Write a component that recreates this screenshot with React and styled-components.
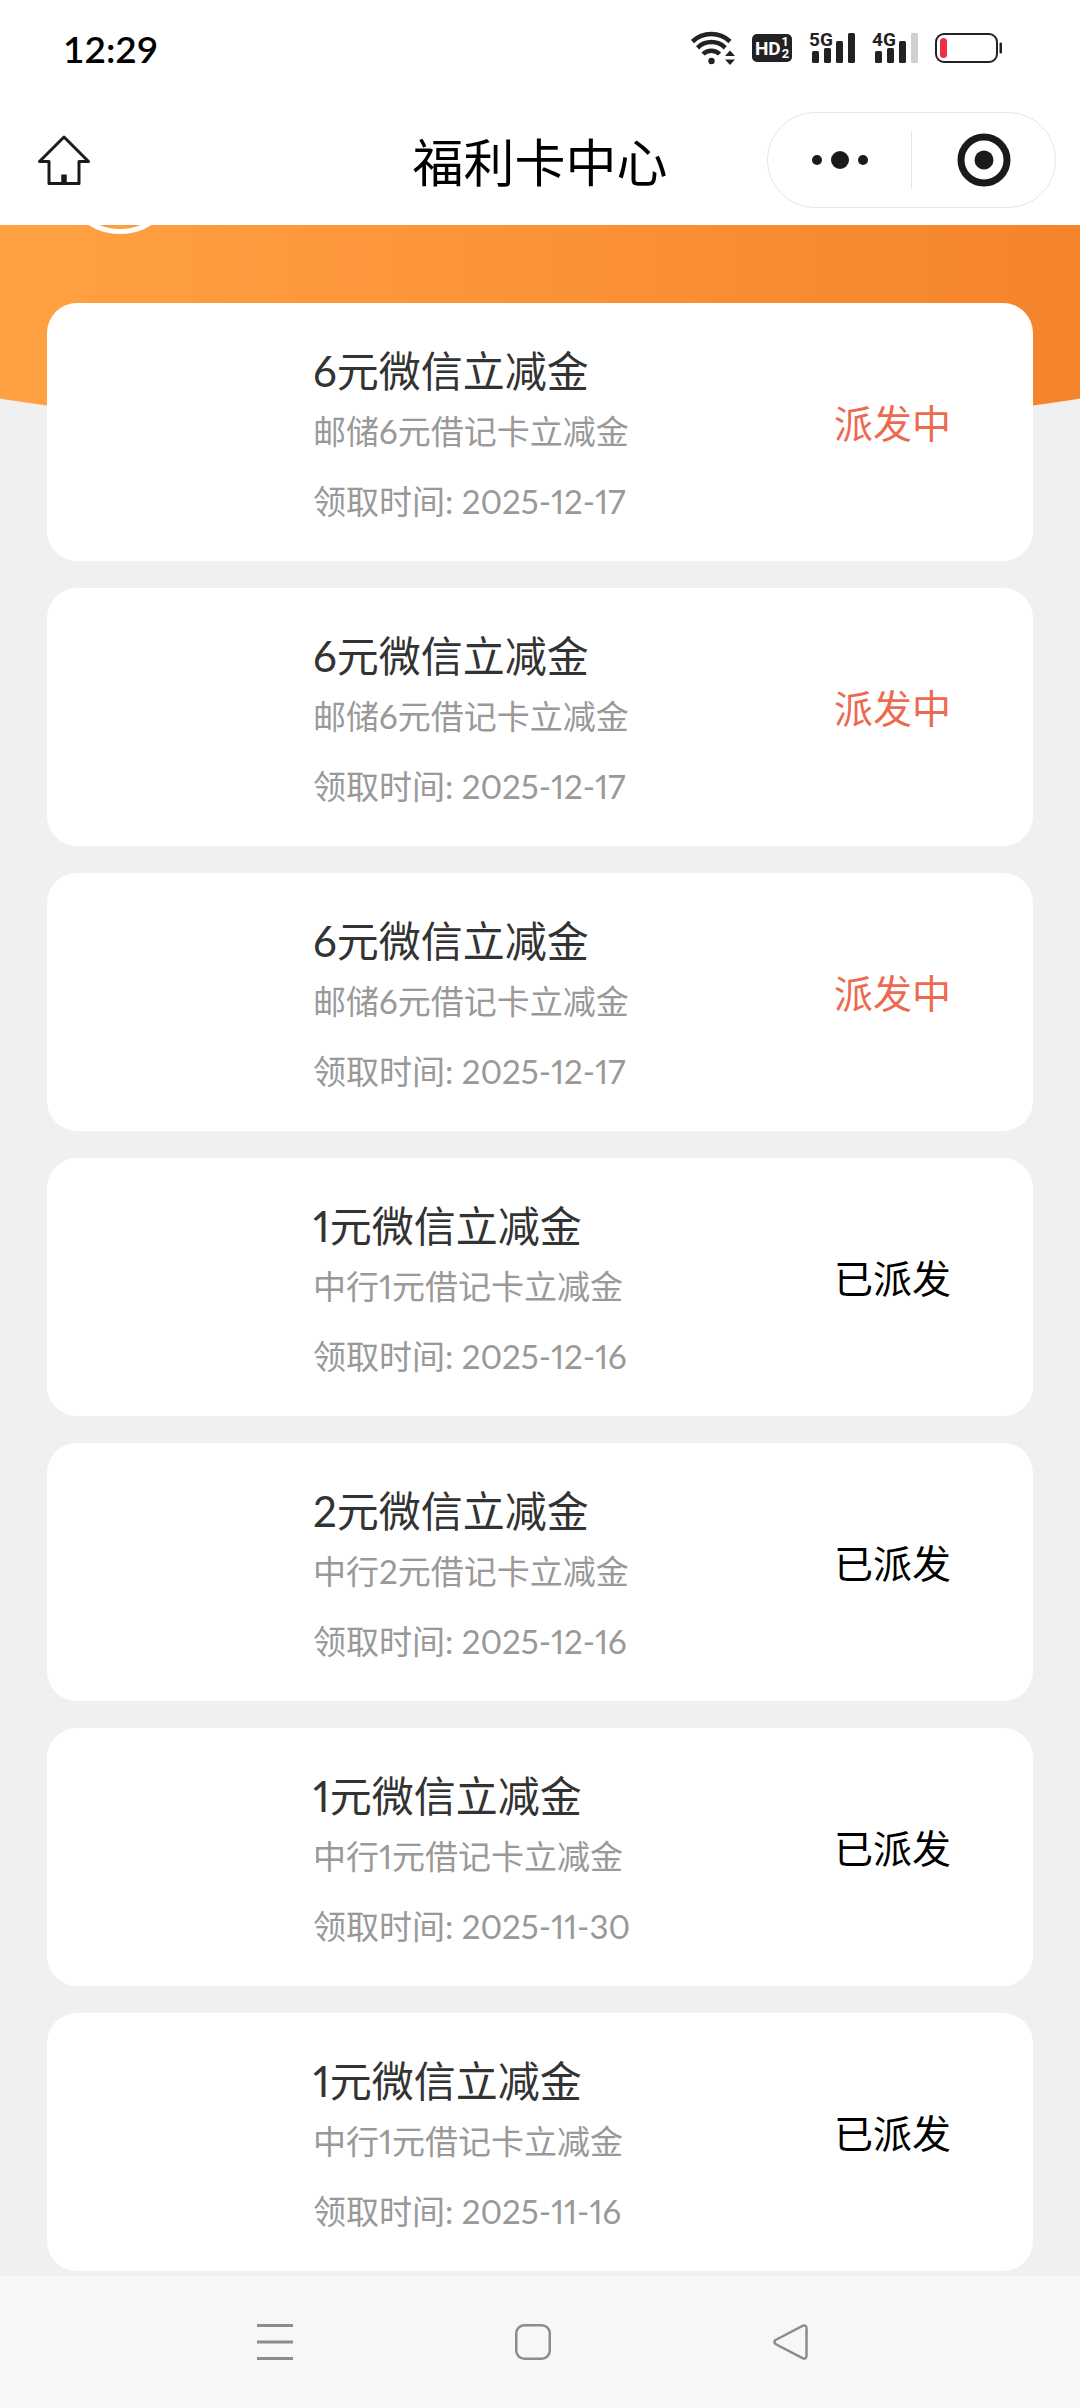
import React from "react";
import styled, { createGlobalStyle } from "styled-components";

const records = [
  { id: 1, amount: 6, bank: "邮储", date: "2025-12-17", pending: true },
  { id: 2, amount: 6, bank: "邮储", date: "2025-12-17", pending: true },
  { id: 3, amount: 6, bank: "邮储", date: "2025-12-17", pending: true },
  { id: 4, amount: 1, bank: "中行", date: "2025-12-16", pending: false },
  { id: 5, amount: 2, bank: "中行", date: "2025-12-16", pending: false },
  { id: 6, amount: 1, bank: "中行", date: "2025-11-30", pending: false },
  { id: 7, amount: 1, bank: "中行", date: "2025-11-16", pending: false },
];

function WifiIcon() {
  return (
    <svg width="44" height="34" viewBox="0 0 44 34" fill="none" stroke="#222" strokeWidth="4.500">
      <path d="M1.500 10.500a27.500 27.500 0 0 1 37.500 0" />
      <path d="M6.600 16.800a19.600 19.600 0 0 1 27.600 0" />
      <path d="M12 23a12 12 0 0 1 16.600 0" />
      <circle cx="20.500" cy="30" r="3.200" fill="#222" stroke="none" />
      <path d="M34 25l5-5.500 5 5.500zM34 28.500l5 5.500 5-5.500z" fill="#222" stroke="none" />
    </svg>
  );
}

function SignalIcon({ label, weak }) {
  return (
    <svg width="46" height="42" viewBox="0 -4 46 42" fill="#222">
      <text x="0" y="15" fontFamily="Roboto, sans-serif" fontSize="19" fontWeight="700">
        {label}
      </text>
      <rect x="3" y="20" width="7" height="12" rx="1.500" />
      <rect x="15" y="17" width="7" height="15" rx="1.500" />
      <rect x="27" y="10" width="7" height="22" rx="1.500" />
      <rect x="39" y="2" width="7" height="30" rx="1.500" fill={weak ? "#d0d0d0" : "#222"} />
    </svg>
  );
}

function BatteryIcon() {
  return (
    <svg width="67" height="34" viewBox="0 0 67 34" fill="none">
      <rect x="1" y="3" width="61" height="28" rx="8" stroke="#222" strokeWidth="2" />
      <rect x="5" y="7" width="7" height="20" rx="3.500" fill="#ee2f45" />
      <rect x="64.500" y="11.500" width="2.500" height="11" rx="1" fill="#222" />
    </svg>
  );
}

export default function App() {
  return (
    <Page>
      <GlobalStyle />
      <Header>
        <StatusBar>
          <time>12:29</time>
          <StatusIcons>
            <WifiIcon />
            <HdBadge>
              HD
              <HdLines>
                <span>1</span>
                <span>2</span>
              </HdLines>
            </HdBadge>
            <SignalIcon label="5G" />
            <SignalIcon label="4G" weak />
            <BatteryIcon />
          </StatusIcons>
        </StatusBar>
        <TitleBar>
          <HomeButton aria-label="首页">
            <svg width="54" height="50" viewBox="0 0 54 50" fill="none" stroke="#1a1a1a" strokeWidth="3" strokeLinejoin="round">
              <path d="M27 2L2.500 26.500H12V48.500H42V26.500H51.500Z" />
              <path d="M27 39.500V48" strokeWidth="5.500" />
            </svg>
          </HomeButton>
          <h1>福利卡中心</h1>
          <Capsule>
            <IconButton aria-label="更多">
              <svg width="58" height="20" viewBox="0 0 58 20" fill="#1a1a1a">
                <circle cx="6" cy="10" r="5" />
                <circle cx="29" cy="10" r="9" />
                <circle cx="52" cy="10" r="5" />
              </svg>
            </IconButton>
            <Divider />
            <IconButton aria-label="关闭">
              <svg width="54" height="54" viewBox="0 0 54 54" fill="#1a1a1a">
                <circle cx="27" cy="27" r="23" fill="none" stroke="#1a1a1a" strokeWidth="7" />
                <circle cx="27" cy="27" r="9.500" />
              </svg>
            </IconButton>
          </Capsule>
        </TitleBar>
      </Header>
      <Content>
        <Banner />
        <Avatar />
        <CardList>
          {records.map((item) => (
            <Card key={item.id}>
              <Info>
                <h2>{item.amount}元微信立减金</h2>
                <p>
                  {item.bank}
                  {item.amount}元借记卡立减金
                </p>
                <p className="time">领取时间: {item.date}</p>
              </Info>
              <Status $pending={item.pending}>{item.pending ? "派发中" : "已派发"}</Status>
            </Card>
          ))}
        </CardList>
      </Content>
      <NavBar>
        <IconButton aria-label="最近任务">
          <svg width="36" height="36" viewBox="0 0 36 36" stroke="#8c8c8c" strokeWidth="3">
            <path d="M0 1.500H36M0 18H36M0 34.500H36" />
          </svg>
        </IconButton>
        <IconButton aria-label="主屏幕">
          <svg width="36" height="36" viewBox="0 0 36 36" fill="none" stroke="#8c8c8c" strokeWidth="2.500">
            <rect x="1.250" y="1.250" width="33.500" height="33.500" rx="8" />
          </svg>
        </IconButton>
        <IconButton aria-label="返回">
          <svg width="36" height="36" viewBox="0 0 36 36" fill="none" stroke="#8c8c8c" strokeWidth="2.500">
            <path d="M2.500 16L29.500 1.800Q33.500 0.500 33.500 4.500V31.500Q33.500 35.500 29.500 34.200L2.500 20Q0.500 18 2.500 16Z" />
          </svg>
        </IconButton>
      </NavBar>
    </Page>
  );
}

const GlobalStyle = createGlobalStyle`
  * {
    box-sizing: border-box;
    margin: 0;
    padding: 0;
  }
  body {
    background-color: #f0f0f0;
    font-family: Lato, "Noto Sans CJK SC", sans-serif;
    font-variant-numeric: proportional-nums;
  }
`;

const Page = styled.div`
  display: flex;
  flex-direction: column;
  min-height: 100vh;
`;

const Header = styled.header`
  position: relative;
  z-index: 1;
  background-color: #fff;
  padding-bottom: 17px;
`;

const StatusBar = styled.div`
  display: flex;
  align-items: center;
  justify-content: space-between;
  height: 96px;
  padding: 0 78px 0 63px;
  time {
    font-size: 37px;
    font-weight: 600;
    font-variant-numeric: tabular-nums;
    color: #000;
  }
`;

const StatusIcons = styled.div`
  display: flex;
  align-items: center;
  gap: 17px;
`;

const HdBadge = styled.span`
  display: flex;
  align-items: center;
  justify-content: center;
  gap: 1px;
  width: 40px;
  height: 28px;
  border-radius: 5px;
  background-color: #222;
  color: #fff;
  font-family: Roboto, sans-serif;
  font-size: 19px;
  font-weight: 700;
`;

const HdLines = styled.span`
  display: flex;
  flex-direction: column;
  font-size: 13px;
  line-height: 12px;
`;

const TitleBar = styled.div`
  display: grid;
  grid-template-columns: 1fr auto 1fr;
  align-items: center;
  padding: 16px 24px 0;
  h1 {
    padding-top: 6px;
    font-size: 51px;
    line-height: 60px;
    font-weight: 400;
    color: #000;
  }
`;

const IconButton = styled.button`
  display: flex;
  align-items: center;
  justify-content: center;
  border: none;
  background: none;
  cursor: pointer;
`;

const HomeButton = styled(IconButton)`
  justify-self: start;
  padding-left: 13px;
`;

const Capsule = styled.div`
  display: grid;
  grid-template-columns: 1fr 1px 1fr;
  align-items: center;
  justify-self: end;
  width: 289px;
  height: 96px;
  border: 1px solid #e5e5e5;
  border-radius: 48px;
`;

const Divider = styled.span`
  height: 58px;
  background-color: #e5e5e5;
`;

const Content = styled.main`
  position: relative;
  flex: 1;
  overflow: hidden;
  padding: 78px 47px 5px;
`;

const Banner = styled.div`
  position: absolute;
  top: 0;
  left: -20%;
  width: 140%;
  height: 209px;
  border-radius: 0 0 50% 50% / 0 0 118px 118px;
  background: linear-gradient(90deg, #ffa244 14%, #fe963c 40%, #f4842b 86%);
`;

const Avatar = styled.div`
  position: absolute;
  top: -109px;
  left: 61px;
  width: 118px;
  height: 118px;
  border: 5px solid #fff;
  border-radius: 50%;
`;

const CardList = styled.ul`
  position: relative;
  display: flex;
  flex-direction: column;
  gap: 27px;
  list-style: none;
`;

const Card = styled.li`
  display: flex;
  align-items: center;
  justify-content: space-between;
  height: 258px;
  padding: 0 82px 0 266px;
  border-radius: 30px;
  background-color: #fff;
`;

const Info = styled.div`
  padding-top: 7px;
  h2 {
    font-size: 42px;
    line-height: 60px;
    font-weight: 400;
    color: #333;
  }
  p {
    font-size: 33px;
    line-height: 60px;
    color: #999;
  }
  .time {
    margin-top: 10px;
  }
`;

const Status = styled.span`
  padding-bottom: 18px;
  font-size: 39px;
  line-height: 60px;
  color: ${(props) => (props.$pending ? "#ec6a50" : "#000")};
`;

const NavBar = styled.nav`
  display: flex;
  align-items: center;
  justify-content: center;
  gap: 222px;
  height: 132px;
  padding-right: 14px;
  background-color: #f7f7f7;
`;
